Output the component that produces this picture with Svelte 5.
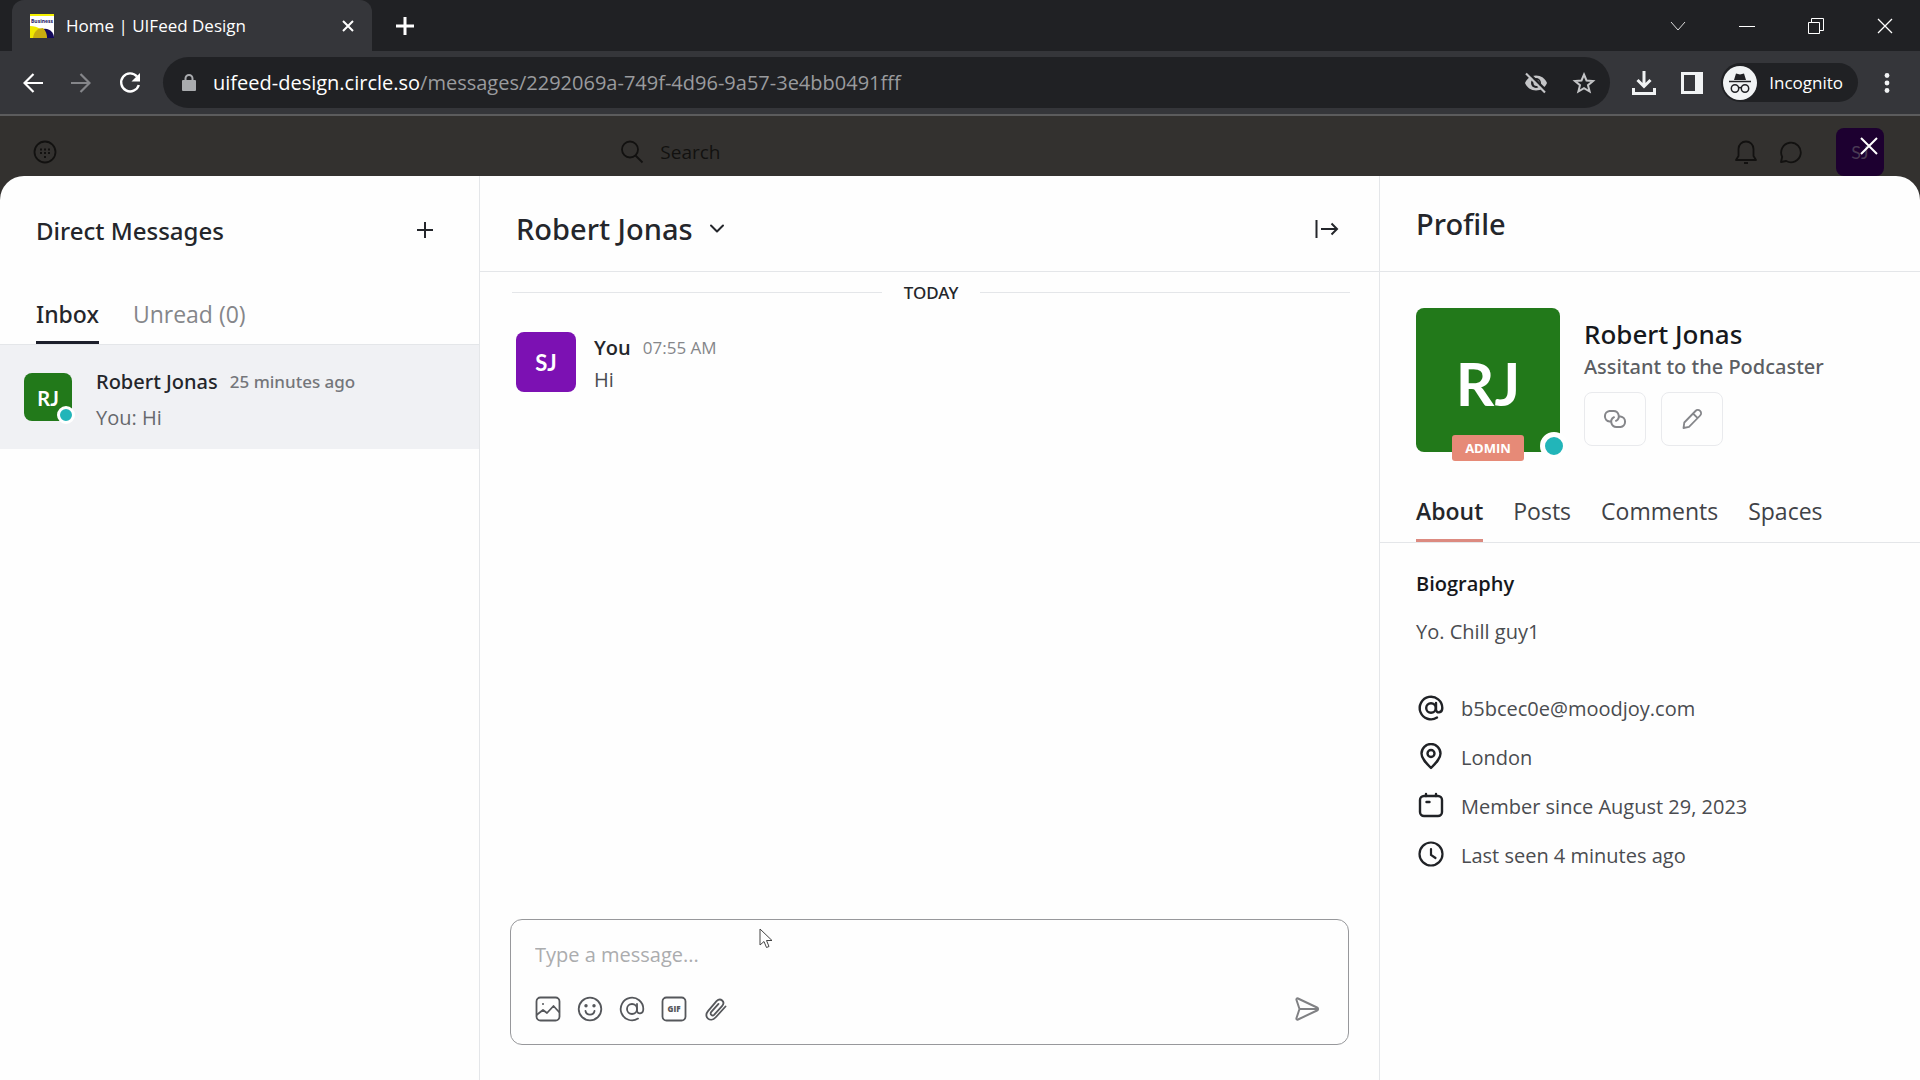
<script lang="ts">
	let activeInboxTab = 'Inbox'
	let activeProfileTab = 'About'
	let message = ''

	const inboxTabs = [
		{ name: 'Inbox', label: 'Inbox' },
		{ name: 'Unread', label: 'Unread (0)' },
	]
	const profileTabs = ['About', 'Posts', 'Comments', 'Spaces']
</script>

<div class="browser">
	<header class="chrome">
		<div class="tab-strip">
			<div class="browser-tab">
				<svg class="favicon" width="24" height="24" viewBox="0 0 24 24">
					<rect width="24" height="24" fill="#fff" />
					<rect width="24" height="2" fill="#f4f000" />
					<text x="1" y="9" font-size="5" font-weight="700" fill="#1a1464">Business</text>
					<path d="M13 15a9 9 0 0 1 11 9H15z" fill="#140a5c" />
					<path d="M0 12c8 0 14 4 17 12H0z" fill="#f0e800" />
					<path d="M3 24c1-7 5-10 10-10 3 3 4 6 4 10z" fill="#c8ac10" />
				</svg>
				<span class="browser-tab-title">Home | UIFeed Design</span>
				<button type="button" class="plain" aria-label="Close tab">
					<svg width="14" height="14" viewBox="0 0 14 14" stroke="#fff" stroke-width="2"><path d="M2 2l10 10M12 2L2 12" /></svg>
				</button>
			</div>
			<button type="button" class="plain new-tab" aria-label="New tab">
				<svg width="18" height="18" viewBox="0 0 18 18" stroke="#fff" stroke-width="3"><path d="M9 0v18M0 9h18" /></svg>
			</button>
			<div class="window-controls">
				<button type="button" class="plain" aria-label="Search tabs">
					<svg width="16" height="16" viewBox="0 0 16 16" fill="none" stroke="#ddd"><path d="M1 4l7 8 7-8" /></svg>
				</button>
				<button type="button" class="plain" aria-label="Minimize">
					<svg width="16" height="16" viewBox="0 0 16 16" stroke="#fff"><path d="M0 8.5h16" /></svg>
				</button>
				<button type="button" class="plain" aria-label="Restore">
					<svg width="16" height="16" viewBox="0 0 16 16" fill="none" stroke="#fff"><path d="M.5 4.5h11v11H.5zM3.5 4.5V.5h12v12h-4" /></svg>
				</button>
				<button type="button" class="plain" aria-label="Close window">
					<svg width="16" height="16" viewBox="0 0 16 16" stroke="#fff" stroke-width="1.3"><path d="M1 1l14 14M15 1L1 15" /></svg>
				</button>
			</div>
		</div>

		<div class="toolbar">
			<div class="nav-buttons">
				<button type="button" class="plain" aria-label="Back">
					<svg width="20" height="20" viewBox="0 0 20 20" fill="none" stroke="#fff" stroke-width="2.2"><path d="M20 10H2M10.5 1L1.5 10l9 9" /></svg>
				</button>
				<button type="button" class="plain" aria-label="Forward">
					<svg width="20" height="20" viewBox="0 0 20 20" fill="none" stroke="#85868a" stroke-width="2.2"><path d="M0 10h18M9.5 1l9 9-9 9" /></svg>
				</button>
				<button type="button" class="plain" aria-label="Reload">
					<svg width="22" height="22" viewBox="0 0 22 22"><path d="M18 4.5A9 9 0 1 0 19.8 13" fill="none" stroke="#fff" stroke-width="2.4" /><path d="M21 1v8.5h-8.5z" fill="#fff" /></svg>
				</button>
			</div>
			<div class="address-bar">
				<svg width="14" height="18" viewBox="0 0 14 18"><rect y="6" width="14" height="11" rx="1" fill="#a9abae" /><path d="M3.5 7V4.5a3.5 3.5 0 0 1 7 0V7" fill="none" stroke="#a9abae" stroke-width="2" /></svg>
				<span class="url"><strong>uifeed-design.circle.so</strong>/messages/2292069a-749f-4d96-9a57-3e4bb0491fff</span>
				<button type="button" class="plain" aria-label="Third-party cookies blocked">
					<svg width="24" height="24" viewBox="0 0 24 24">
						<path d="M12 4.5C7 4.5 2.7 7.6 1 12c1.7 4.4 6 7.5 11 7.5s9.3-3.1 11-7.5c-1.7-4.4-6-7.5-11-7.5z" fill="#c4c5c7" />
						<circle cx="12" cy="12" r="5" fill="#202124" /><circle cx="12.5" cy="12" r="3" fill="#c4c5c7" />
						<path d="M4 1.5L23 20.5" stroke="#202124" stroke-width="2.5" /><path d="M2 2.5l19 19" stroke="#c4c5c7" stroke-width="2.2" />
					</svg>
				</button>
				<button type="button" class="plain" aria-label="Bookmark this page">
					<svg width="24" height="24" viewBox="0 0 24 24" fill="none" stroke="#c4c5c7" stroke-width="2"><path d="M12 3.5l2.5 6 6.5.5-5 4.2 1.6 6.3L12 17.1l-5.6 3.4L8 14.2 3 10l6.5-.5z" /></svg>
				</button>
			</div>
			<div class="toolbar-actions">
				<button type="button" class="plain" aria-label="Downloads">
					<svg width="24" height="24" viewBox="0 0 24 24" fill="none" stroke="#f1f3f4" stroke-width="3"><path d="M12 0v15M5.5 9l6.5 6.5L18.5 9M1.5 17v5.5h21V17" /></svg>
				</button>
				<button type="button" class="plain" aria-label="Side panel">
					<svg width="22" height="22" viewBox="0 0 22 22"><path d="M0 0h22v22H0zM3 3v16h11V3z" fill="#f1f3f4" fill-rule="evenodd" /></svg>
				</button>
			</div>
			<button type="button" class="incognito">
				<svg width="34" height="34" viewBox="0 0 34 34">
					<circle cx="17" cy="17" r="17" fill="#f1f3f4" />
					<path d="M11 14l2-6.5 4 1 4-1 2 6.5z" fill="#202124" />
					<path d="M6 15.5h22" stroke="#202124" stroke-width="1.5" />
					<g fill="none" stroke="#202124" stroke-width="1.5"><circle cx="12" cy="22.5" r="3.7" /><circle cx="22" cy="22.5" r="3.7" /><path d="M15.5 22q1.5-1 3 0" /></g>
				</svg>
				Incognito
			</button>
			<button type="button" class="plain menu" aria-label="Browser menu">
				<svg width="6" height="20" viewBox="0 0 6 20" fill="#f1f3f4"><circle cx="3" cy="2.5" r="2.4" /><circle cx="3" cy="10" r="2.4" /><circle cx="3" cy="17.5" r="2.4" /></svg>
			</button>
		</div>
	</header>

	<div class="site-bar">
		<button type="button" class="plain" aria-label="Community">
			<svg width="24" height="24" viewBox="0 0 24 24" fill="none" stroke="#121110" stroke-width="1.8"><circle cx="12" cy="12" r="10.5" /><path d="M7 9.5h2m2 0h2m2 0h2M7 13h2m2 0h2m2 0h2M11 17h2" /></svg>
		</button>
		<button type="button" class="plain search">
			<svg width="24" height="24" viewBox="0 0 24 24" fill="none" stroke="#121110" stroke-width="1.8"><circle cx="10" cy="9.5" r="8" /><path d="M15.5 15.5l7 7" /></svg>
			Search
		</button>
		<div class="site-actions">
			<button type="button" class="plain" aria-label="Notifications">
				<svg width="24" height="24" viewBox="0 0 24 24" fill="none" stroke="#121110" stroke-width="1.8" stroke-linejoin="round"><path d="M4.5 16V9a7.5 7.5 0 0 1 15 0v7l2.5 4H2zM10 23h4" /></svg>
			</button>
			<button type="button" class="plain" aria-label="Messages">
				<svg width="24" height="24" viewBox="0 0 24 24" fill="none" stroke="#121110" stroke-width="1.8" stroke-linejoin="round"><path d="M3 22l1.2-5.2A9.8 9.8 0 1 1 8.2 21z" /></svg>
			</button>
			<div class="site-avatar">SJ
				<button type="button" class="plain close-modal" aria-label="Close messages">
					<svg width="18" height="18" viewBox="0 0 18 18" stroke="#fff" stroke-width="2"><path d="M1 1l16 16M17 1L1 17" /></svg>
				</button>
			</div>
		</div>
	</div>

	<main class="modal">
		<aside class="inbox">
			<div class="panel-header inbox-header">
				<h2>Direct Messages</h2>
				<button type="button" class="plain" aria-label="New message">
					<svg width="16" height="16" viewBox="0 0 16 16" stroke="#24262b" stroke-width="2"><path d="M8 0v16M0 8h16" /></svg>
				</button>
			</div>
			<div class="tabs inbox-tabs" role="tablist">
				{#each inboxTabs as tab}
					<button
						type="button"
						role="tab"
						class="tab"
						class:active={activeInboxTab === tab.name}
						aria-selected={activeInboxTab === tab.name}
						on:click={() => (activeInboxTab = tab.name)}>{tab.label}</button>
				{/each}
			</div>
			<a class="thread" href="#robert-jonas">
				<span class="avatar avatar-small">RJ<i class="status"></i></span>
				<span class="thread-body">
					<span class="thread-title"><span class="thread-name">Robert Jonas</span><time>25 minutes ago</time></span>
					<span class="thread-text">You: Hi</span>
				</span>
			</a>
		</aside>

		<section class="chat">
			<div class="panel-header chat-header">
				<button type="button" class="plain chat-title">
					<h1>Robert Jonas</h1>
					<svg width="16" height="16" viewBox="0 0 16 16" fill="none" stroke="#24262b" stroke-width="2" stroke-linecap="round" stroke-linejoin="round"><path d="M2 4.5l6 6 6-6" /></svg>
				</button>
				<button type="button" class="plain" aria-label="Hide profile">
					<svg width="24" height="20" viewBox="0 0 24 20" fill="none" stroke="#24262b" stroke-width="2"><path d="M1.5 1v18M6 10h16M16.5 4.5L22 10l-5.5 5.5" /></svg>
				</button>
			</div>
			<div class="messages">
				<div class="day"><span>TODAY</span></div>
				<article class="message">
					<span class="avatar avatar-medium">SJ</span>
					<div>
						<p class="message-meta"><strong>You</strong><time>07:55 AM</time></p>
						<p class="message-text">Hi</p>
					</div>
				</article>
			</div>
			<form class="composer" on:submit|preventDefault>
				<textarea rows="1" placeholder="Type a message..." aria-label="Message" bind:value={message}></textarea>
				<div class="composer-actions">
					<button type="button" class="plain" aria-label="Add image">
						<svg width="26" height="26" viewBox="0 0 26 26" fill="none" stroke="#55575b" stroke-width="1.8" stroke-linejoin="round"><rect x="1.5" y="1.5" width="23" height="23" rx="4" /><path d="M1.5 19l6.5-5 4 3 6.5-7 6 6.5" /><circle cx="8" cy="8" r="1" fill="#55575b" stroke="none" /></svg>
					</button>
					<button type="button" class="plain" aria-label="Add emoji">
						<svg width="26" height="26" viewBox="0 0 26 26" fill="none" stroke="#55575b" stroke-width="1.8" stroke-linecap="round"><circle cx="13" cy="13" r="11.3" /><path d="M8.5 15a4.6 4.6 0 0 0 9 0" /><circle cx="9" cy="9.8" r="1.7" fill="#55575b" stroke="none" /><circle cx="17" cy="9.8" r="1.7" fill="#55575b" stroke="none" /></svg>
					</button>
					<button type="button" class="plain" aria-label="Mention someone">
						<svg width="26" height="26" viewBox="0 0 26 26" fill="none" stroke="#55575b" stroke-width="1.8" stroke-linecap="round"><circle cx="13" cy="13" r="5" /><path d="M18 8v6.5c0 4 6.3 4 6.3-1.5A11.3 11.3 0 1 0 19 22.6" /></svg>
					</button>
					<button type="button" class="plain" aria-label="Add GIF">
						<svg width="26" height="26" viewBox="0 0 26 26"><rect x="1.5" y="1.5" width="23" height="23" rx="4" fill="none" stroke="#55575b" stroke-width="1.8" /><text x="13" y="16" text-anchor="middle" font-size="8" font-weight="800" fill="#55575b">GIF</text></svg>
					</button>
					<button type="button" class="plain" aria-label="Attach file">
						<svg width="26" height="26" viewBox="0 0 26 26" fill="none" stroke="#55575b" stroke-width="1.8" stroke-linecap="round"><path d="M22.5 10.5L12.5 21.5c-5 5.5-12.5-.5-7.5-6.3l8.500-10c4-4.2 9.300.7 5.500 4.900l-7.700 8.500c-2 2.100-5-.4-3-2.700l7.200-8" /></svg>
					</button>
					<button type="submit" class="plain send" aria-label="Send">
						<svg width="26" height="26" viewBox="0 0 26 26" fill="none" stroke="#808184" stroke-width="2" stroke-linejoin="round"><path d="M2.5 4c-.4-1.2.4-1.9 1.5-1.5L23 11.5c1.500.7 1.500 2.300 0 3L4 23.500c-1.100.4-1.900-.3-1.500-1.500L5.500 13zM5.500 13H23" /></svg>
					</button>
				</div>
			</form>
			<svg class="pointer" width="14" height="21" viewBox="0 0 14 21" fill="#fff" stroke="#444"><path d="M1 1v16l4-3.5 2.5 6 2.5-1-2.5-6H13z" /></svg>
		</section>

		<aside class="profile">
			<div class="panel-header profile-header"><h2>Profile</h2></div>
			<div class="profile-card">
				<div class="avatar avatar-large">RJ<span class="badge">ADMIN</span><i class="status"></i></div>
				<div>
					<h3>Robert Jonas</h3>
					<p class="headline">Assitant to the Podcaster</p>
					<div class="profile-buttons">
						<button type="button" aria-label="Copy profile link">
							<svg width="24" height="24" viewBox="0 0 24 24" fill="none" stroke="#85868a" stroke-width="2" stroke-linecap="round"><path d="M7.5 14.5H6.500a5.300 5.300 0 0 1 0-10.500h4a5.200 5.200 0 0 1 2.500 9.800" /><path d="M16.500 9.500h1a5.300 5.300 0 0 1 0 10.500h-4a5.200 5.200 0 0 1-2.500-9.800" /></svg>
						</button>
						<button type="button" aria-label="Edit profile">
							<svg width="24" height="24" viewBox="0 0 24 24" fill="none" stroke="#85868a" stroke-width="1.8" stroke-linejoin="round"><path d="M3.5 21l.8-5.5L15.500 4a3.200 3.200 0 0 1 4.700 4.500L9 19.800zM13 6.500l4.700 4.700" /></svg>
						</button>
					</div>
				</div>
			</div>
			<div class="tabs profile-tabs" role="tablist">
				{#each profileTabs as tab}
					<button
						type="button"
						role="tab"
						class="tab"
						class:active={activeProfileTab === tab}
						aria-selected={activeProfileTab === tab}
						on:click={() => (activeProfileTab = tab)}>{tab}</button>
				{/each}
			</div>
			<div class="about">
				<h4>Biography</h4>
				<p>Yo. Chill guy1</p>
				<ul>
					<li>
						<svg width="30" height="30" viewBox="0 0 30 30" fill="none" stroke="#202226" stroke-width="2.4" stroke-linecap="round"><circle cx="15" cy="14" r="4.8" /><path d="M20 9v6.5c0 4 6.3 4 6.3-1.5A11.3 11.3 0 1 0 21 23.6" /></svg>
						b5bcec0e@moodjoy.com
					</li>
					<li>
						<svg width="30" height="30" viewBox="0 0 30 30" fill="none" stroke="#202226" stroke-width="2.4" stroke-linejoin="round"><path d="M15 25c-5-5-9.5-9.5-9.5-14.5a9.5 9.5 0 0 1 19 0C24.5 15.5 20 20 15 25z" /><circle cx="15" cy="10.5" r="3.5" /></svg>
						London
					</li>
					<li>
						<svg width="30" height="30" viewBox="0 0 30 30" fill="none" stroke="#202226" stroke-width="2.4" stroke-linecap="round"><rect x="4" y="4" width="22" height="20" rx="4" /><path d="M10 2v2M20 2v2M10.5 10h3" /></svg>
						Member since August 29, 2023
					</li>
					<li>
						<svg width="30" height="30" viewBox="0 0 30 30" fill="none" stroke="#202226" stroke-width="2.2" stroke-linecap="round"><circle cx="15" cy="13" r="11.5" /><path d="M15 8v6l4.5 3" /></svg>
						Last seen 4 minutes ago
					</li>
				</ul>
			</div>
		</aside>
	</main>
</div>

<style>
	:global(body) {
		margin: 0;
		background: #33312f;
	}
	.browser {
		display: flex;
		flex-direction: column;
		min-height: 100vh;
		font-family: 'Open Sans', 'Noto Sans', sans-serif;
		color: #24262b;
	}
	.browser :is(h1, h2, h3, h4, p, ul) {
		margin: 0;
		padding: 0;
		font-weight: 400;
	}
	.browser :is(h1, h2, h3, .headline, .thread-name, .thread time, .day) {
		font-family: 'Noto Sans', 'Open Sans', sans-serif;
		font-weight: 500;
	}
	svg {
		display: block;
		flex: none;
	}
	button {
		font: inherit;
		color: inherit;
		cursor: pointer;
	}
	.plain {
		display: flex;
		align-items: center;
		padding: 0;
		border: none;
		background: none;
	}

	.chrome {
		background: #35363a;
		border-bottom: 2px solid #5c5c5d;
		color: #fff;
	}
	.tab-strip {
		display: flex;
		align-items: center;
		height: 51px;
		padding: 0 27px 0 12px;
		background: #202124;
	}
	.browser-tab {
		display: flex;
		align-items: center;
		gap: 12px;
		box-sizing: border-box;
		width: 360px;
		height: 51px;
		padding: 0 17px 0 18px;
		border-radius: 12px 12px 0 0;
		background: #35363a;
		font-size: 17px;
	}
	.browser-tab-title {
		flex: 1;
	}
	.new-tab {
		margin-left: 24px;
	}
	.window-controls {
		display: flex;
		gap: 53px;
		margin-left: auto;
		height: 44px;
	}
	.toolbar {
		display: flex;
		align-items: center;
		height: 63px;
		padding: 0 30px 0 23px;
	}
	.nav-buttons {
		display: flex;
		gap: 28px;
		width: 140px;
	}
	.address-bar {
		display: flex;
		flex: 1;
		align-items: center;
		gap: 24px;
		height: 51px;
		padding: 0 14px 0 19px;
		border-radius: 26px;
		background: #202124;
		font-size: 20px;
	}
	.url {
		flex: 1;
		margin-left: -7px;
		color: #9a9b9e;
	}
	.url strong {
		font-weight: 400;
		color: #fff;
	}
	.toolbar-actions {
		display: flex;
		gap: 25px;
		margin: 0 18px 0 22px;
	}
	.incognito {
		display: flex;
		align-items: center;
		gap: 12px;
		height: 39px;
		padding: 0 15px 0 2px;
		border: none;
		border-radius: 20px;
		background: #202124;
		font-size: 17px;
	}
	.menu {
		margin-left: 26px;
	}

	.site-bar {
		display: flex;
		align-items: center;
		justify-content: space-between;
		box-sizing: border-box;
		height: 60px;
		padding: 12px 36px 0 33px;
		background: #33312f;
		color: #121110;
	}
	.search {
		gap: 16px;
		margin-right: auto;
		margin-left: calc(30% + 8px);
		font-size: 19px;
	}
	.site-actions {
		display: flex;
		align-items: center;
		gap: 20px;
	}
	.site-avatar {
		position: relative;
		width: 48px;
		margin-left: 14px;
		border-radius: 8px;
		background: #1d0030;
		color: #4a3a54;
		font-family: Lato, 'Open Sans', sans-serif;
		font-size: 18px;
		line-height: 48px;
		text-align: center;
	}
	.close-modal {
		position: absolute;
		top: 9px;
		right: 6px;
	}

	.modal {
		display: grid;
		flex: 1;
		grid-template-columns: 8fr 15fr 9fr;
		overflow: hidden;
		border-radius: 24px 24px 0 0;
		background: #fefefe;
	}
	.panel-header {
		display: flex;
		align-items: center;
		justify-content: space-between;
		box-sizing: border-box;
		height: 96px;
		padding: 0 36px;
		border-bottom: 1px solid #e4e6e9;
	}
	.inbox,
	.chat {
		border-right: 1px solid #e4e6e9;
	}
	.tabs {
		display: flex;
		gap: 30px;
		border-bottom: 1px solid #e4e6e9;
	}
	.tab {
		padding: 0;
		border: none;
		border-bottom: 3px solid transparent;
		background: none;
		font-size: 23px;
	}

	.inbox-header {
		padding-right: 46px;
		padding-top: 12px;
		border-bottom: none;
	}
	.inbox-header h2 {
		font-size: 24px;
	}
	.inbox-tabs {
		gap: 34px;
		height: 72px;
		padding: 0 36px;
	}
	.inbox-tabs .tab {
		padding-top: 14px;
		color: #85868a;
	}
	.inbox-tabs .tab.active {
		border-color: #1d1f2b;
		color: #24262b;
		font-family: 'Noto Sans', 'Open Sans', sans-serif;
		font-weight: 500;
	}
	.thread {
		display: flex;
		align-items: center;
		gap: 24px;
		height: 104px;
		padding: 0 24px;
		background: #f0f1f4;
		color: inherit;
		text-decoration: none;
	}
	.thread-body {
		display: flex;
		flex-direction: column;
		gap: 6px;
		padding-top: 6px;
		line-height: 30px;
	}
	.thread-title {
		display: flex;
		gap: 12px;
	}
	.thread-name {
		font-size: 20px;
	}
	.thread time {
		color: #74767a;
		font-size: 17px;
	}
	.thread-text {
		color: #66686c;
		font-size: 20px;
	}

	.avatar {
		position: relative;
		flex: none;
		border-radius: 8px;
		background: #22791a;
		color: #fff;
		font-family: Lato, 'Open Sans', sans-serif;
		font-weight: 700;
		text-align: center;
	}
	.avatar-small {
		width: 48px;
		height: 48px;
		font-size: 20px;
		line-height: 50px;
	}
	.avatar-medium {
		width: 60px;
		height: 60px;
		background: #7c11b3;
		font-size: 22px;
		line-height: 62px;
	}
	.avatar-large {
		width: 144px;
		height: 144px;
		font-size: 60px;
		line-height: 150px;
	}
	.status {
		position: absolute;
		right: -3px;
		bottom: -3px;
		width: 12px;
		height: 12px;
		border: 3px solid #fff;
		border-radius: 50%;
		background: #22b5b9;
	}
	.avatar-large .status {
		right: -8px;
		bottom: -8px;
		width: 18px;
		height: 18px;
		border-width: 5px;
	}
	.badge {
		position: absolute;
		bottom: -9px;
		left: 36px;
		width: 72px;
		border-radius: 3px;
		background: #e68a77;
		font-family: 'Open Sans', sans-serif;
		font-size: 13px;
		line-height: 26px;
	}

	.chat {
		display: flex;
		position: relative;
		flex-direction: column;
	}
	.chat-header {
		padding-top: 10px;
		padding-right: 40px;
	}
	.chat-title {
		gap: 16px;
	}
	.chat-title h1 {
		font-size: 29px;
		line-height: 36px;
	}
	.messages {
		flex: 1;
		padding: 0 29px 0 32px;
	}
	.day {
		display: flex;
		align-items: center;
		gap: 22px;
		font-size: 17px;
		line-height: 41px;
	}
	.day::before,
	.day::after {
		content: '';
		flex: 1;
		height: 1px;
		background: #e4e6e9;
	}
	.message {
		display: flex;
		gap: 18px;
		padding: 19px 4px;
	}
	.message-meta {
		display: flex;
		gap: 12px;
		font-size: 20px;
		line-height: 32px;
	}
	.message-meta strong {
		font-weight: 600;
	}
	.message-meta time {
		color: #85868a;
		font-size: 17px;
	}
	.message-text {
		color: #4a4c50;
		font-size: 20px;
		line-height: 32px;
	}
	.composer {
		display: flex;
		flex-direction: column;
		gap: 25px;
		margin: 0 30px 35px;
		padding: 19px 24px 22px;
		border: 1px solid #97989b;
		border-radius: 12px;
	}
	.composer textarea {
		height: 32px;
		padding: 0;
		border: none;
		outline: none;
		background: none;
		font: 20px/32px 'Open Sans', 'Noto Sans', sans-serif;
		resize: none;
	}
	.composer textarea::placeholder {
		color: #abacae;
	}
	.composer-actions {
		display: flex;
		gap: 16px;
	}
	.send {
		margin-left: auto;
		margin-right: 4px;
	}
	.pointer {
		position: absolute;
		bottom: 131px;
		left: 31%;
	}

	.profile-header h2 {
		font-size: 29px;
	}
	.profile-card {
		display: flex;
		gap: 24px;
		padding: 36px 36px 0;
	}
	.profile-card h3 {
		margin-top: 8px;
		color: #16181c;
		font-size: 26px;
		line-height: 36px;
	}
	.profile-card .headline {
		color: #5c5e63;
		font-size: 20px;
		line-height: 30px;
	}
	.profile-buttons {
		display: flex;
		gap: 15px;
		margin-top: 10px;
	}
	.profile-buttons button {
		display: flex;
		align-items: center;
		justify-content: center;
		width: 62px;
		height: 54px;
		border: 1px solid #e9eaed;
		border-radius: 8px;
		background: none;
	}
	.profile-tabs {
		height: 65px;
		margin-top: 25px;
		padding: 0 36px;
	}
	.profile-tabs .tab {
		padding-top: 5px;
		color: #404247;
	}
	.profile-tabs .tab.active {
		border-color: #dc8a80;
		color: #24262b;
		font-weight: 600;
	}
	.about {
		padding: 23px 36px;
		color: #4a4c50;
		font-size: 20px;
	}
	.browser .about h4 {
		color: #16181c;
		font-size: 20px;
		font-weight: 600;
		line-height: 36px;
	}
	.browser .about p {
		margin-top: 12px;
		line-height: 36px;
	}
	.browser .about ul {
		margin-top: 34px;
		list-style: none;
	}
	.about li {
		display: flex;
		align-items: center;
		gap: 15px;
		height: 49px;
	}
</style>
